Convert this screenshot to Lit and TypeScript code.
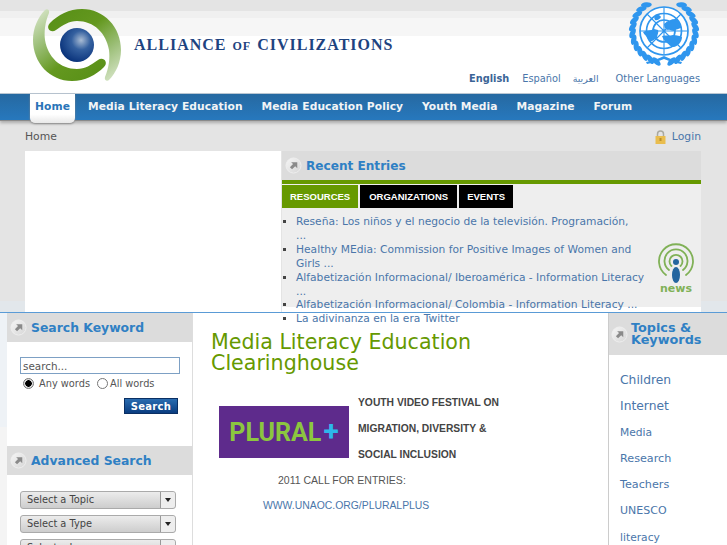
import { LitElement, html, svg, css } from 'lit';
import { customElement } from 'lit/decorators.js';

const NAV = ['Media Literacy Education', 'Media Education Policy', 'Youth Media', 'Magazine', 'Forum'];
// the line breaks are the ones the page shows
const ENTRIES = [
  'Reseña: Los niños y el negocio de la televisión. Programación,\n...',
  'Healthy MEdia: Commission for Positive Images of Women and\nGirls ...',
  'Alfabetización Informacional/ Iberoamérica - Information Literacy\n...',
  'Alfabetización Informacional/ Colombia - Information Literacy ...',
  'La adivinanza en la era Twitter',
];
const TOPICS = [
  { name: 'Children', size: 12.3 },
  { name: 'Internet', size: 12.3 },
  { name: 'Media', size: 10.7 },
  { name: 'Research', size: 11.2 },
  { name: 'Teachers', size: 11.2 },
  { name: 'UNESCO', size: 11 },
  { name: 'literacy', size: 10.7 },
];

const arrowIcon = html`<svg class="arrow" width="17" height="17" viewBox="0 0 18 18">
  <defs>
    <linearGradient id="disc" x1="0" y1="0" x2="1" y2="1">
      <stop offset="0" stop-color="#f6f6f6" />
      <stop offset="1" stop-color="#d6d6d6" />
    </linearGradient>
  </defs>
  <circle cx="9" cy="9" r="8" fill="url(#disc)" stroke="#eee" />
  <path d="M6.500 5.500h6.500v6.500l-2.200-2.200-3.300 3.300-2.300-2.300 3.300-3.300z" fill="#8a8a8a" />
</svg>`;

const swoosh = 'M18 15C26 7 37 1 50 1C72 1 89 19 89 42C89 54 84 65 77 72C75 74 72 72 73 69C77 60 78 50 77 42C74 25 62 13 45 13C37 13 31 17 24 22C19 26 13 20 18 15Z';

const logo = html`<svg class="logo" width="92" height="78" viewBox="0 0 92 78">
  <defs>
    <radialGradient id="sphere" cx="0.62" cy="0.36" r="0.7">
      <stop offset="0" stop-color="#a9bcd4" />
      <stop offset="0.4" stop-color="#34609f" />
      <stop offset="1" stop-color="#062f78" />
    </radialGradient>
    <linearGradient id="sw1" gradientUnits="userSpaceOnUse" x1="30" y1="5" x2="80" y2="70">
      <stop offset="0" stop-color="#5a9118" />
      <stop offset="0.35" stop-color="#64981f" />
      <stop offset="0.7" stop-color="#9cbf78" />
      <stop offset="1" stop-color="#cfe0bd" />
    </linearGradient>
  </defs>
  <path d=${swoosh} fill="url(#sw1)" />
  <path d=${swoosh} fill="url(#sw1)" transform="rotate(180 45 37)" />
  <circle cx="45" cy="37" r="17" fill="url(#sphere)" />
</svg>`;

function leaves(side: number) {
  const out = [];
  for (let a = 14; a <= 150; a += 12) {
    const rad = (a * Math.PI) / 180;
    const r = 31.5;
    const x = 36 + side * r * Math.sin(rad);
    const y = 28 + r * Math.cos(rad);
    const rot = side * (-a + 60);
    out.push(svg`<ellipse cx=${x} cy=${y} rx="2.600" ry="5.400" transform="rotate(${rot} ${x} ${y})" />`);
  }
  return out;
}

const emblem = html`<svg class="emblem" width="72" height="63" viewBox="0 0 72 63" fill="#2f96ee">
  <g>${leaves(1)}${leaves(-1)}</g>
  <path d="M18 59c6-1 12-3 18-6c6 3 12 5 18 6l-1 2c-6-1-12-3-17-5c-5 2-11 4-17 5z" />
  <g fill="none" stroke="#2f96ee" stroke-width="1.700">
    <circle cx="36" cy="28" r="24" fill="#fff" />
    <circle cx="36" cy="28" r="17.500" />
    <circle cx="36" cy="28" r="11" />
    <path d="M36 4v48M12 28h48M19 11l34 34M53 11L19 45" stroke-width="1.100" />
  </g>
  <path d="M15 29c3-2 8-1 11-3l4 1c1 3-1 5-1 8c-3 1-4 4-7 3c-1-3-5-5-7-9z" />
  <path d="M36 21c3-3 7-5 12-5c3 2 5 6 5 9c-2 1-5 1-7 3c-3 0-4-2-6-1c-2 0-4-3-4-6z" />
  <path d="M34 33c4-1 8 0 11-1c4 0 7 1 9 2c0 5-4 9-8 10c-4 0-5-3-7-4c-2-2-4-4-5-7z" />
  <path d="M27 12c2-1 5 0 6 2c-1 2-4 4-6 3c-1-2-1-3 0-5z" />
</svg>`;

const newsIcon = html`<svg class="news-icon" width="36" height="40" viewBox="0 0 36 40" fill="none">
  <g stroke="#80b157" stroke-width="1.800" stroke-linecap="round">
    <path d="M8 32A17 17 0 1 1 28 32" />
    <path d="M11 27A11.500 11.500 0 1 1 25 27" />
    <path d="M13.500 23A6.500 6.500 0 1 1 22.500 23" />
  </g>
  <circle cx="18" cy="19" r="3" fill="#24659f" />
  <ellipse cx="18" cy="32" rx="4" ry="8" fill="#24659f" />
</svg>`;

const lockIcon = html`<svg class="lock" width="11" height="14" viewBox="0 0 11 14">
  <path d="M2.500 7V4a3 3 0 0 1 6 0v3" fill="none" stroke="#a9a9a0" stroke-width="1.500" />
  <rect x="0.500" y="6" width="10" height="8" fill="#e9bd4e" />
  <rect x="4.500" y="8" width="2" height="3" fill="#b98f2c" />
</svg>`;

@customElement('app-root')
export class AppRoot extends LitElement {
  static styles = css`
    :host {
      display: block;
      width: 100%;
      height: 545px;
      overflow: hidden;
      font-family: 'DejaVu Sans', sans-serif;
      font-size: 10.800px;
      background: #e4e4e4;
      color: #555;
    }
    a { color: #4a76aa; }

    .masthead {
      height: 93px;
      box-sizing: border-box;
      display: flex;
      justify-content: space-between;
      padding: 0 27px 0 32px;
      background: linear-gradient(#e4e4e4 0 11px, #f0f0f0 11px 18px, #f6f6f6 18px 36px, #fff 36px);
    }
    .brand { display: flex; align-items: flex-start; }
    .logo { margin-top: 8px; flex: none; }
    .wordmark {
      margin: 36px 0 0 10px;
      font-family: 'Liberation Serif', serif;
      font-weight: bold;
      font-size: 16px;
      line-height: 18px;
      letter-spacing: 1px;
      color: #1e4380;
    }
    .wordmark small { font-size: 12px; margin: 0 1px; }
    .side { display: flex; flex-direction: column; align-items: flex-end; }
    .emblem { margin-top: 3px; overflow: visible; }
    .langs {
      display: flex;
      align-items: center;
      margin-top: 6px;
      font-size: 9.800px;
      line-height: 13px;
      color: #4a76aa;
    }
    .langs b { color: #3a6496; margin-right: 13px; }
    .langs .ar { margin: 0 17px 0 12px; font-size: 9.500px; }

    .nav {
      height: 27px;
      display: flex;
      gap: 18.800px;
      padding-left: 30px;
      background: linear-gradient(#2669a1, #2778bd);
      box-shadow: 0 1px 0 #8a8a8a, 0 3px 3px #aaa;
      border-top: 1px solid #b9c6d2;
      box-sizing: border-box;
      position: relative;
      font-weight: bold;
      font-size: 10.700px;
      line-height: 26px;
      color: #f2f4f6;
      letter-spacing: 0.1px;
    }
    .nav .current {
      width: 45px;
      height: 29px;
      margin-right: -5.800px;
      box-sizing: border-box;
      text-align: center;
      color: #2a74b8;
      background: linear-gradient(#fff 70%, #e8e8e8);
      border-radius: 0 0 5px 5px;
      box-shadow: 0 1px 2px #888;
    }

    .crumbs {
      display: flex;
      justify-content: space-between;
      align-items: center;
      height: 31px;
      padding: 2px 26px 0 25px;
      box-sizing: border-box;
    }
    .crumbs .login { display: flex; align-items: center; gap: 6px; color: #4a76aa; }

    .top {
      height: 161px;
      display: flex;
      gap: 1px;
      padding: 0 26px 0 25px;
      background: linear-gradient(#e4e4e4 150px, #e2e7eb 150px);
    }
    .blank { width: 256px; background: #fff; }
    .recent {
      flex: 1;
      display: flex;
      flex-direction: column;
      background: linear-gradient(#eee 156px, #fff 156px);
    }
    .block-title {
      flex: none;
      display: flex;
      align-items: center;
      gap: 4px;
      height: 29px;
      padding-left: 3px;
      box-sizing: border-box;
      background: #dcdcdc;
      color: #2f80c4;
      font-weight: bold;
      font-size: 12.400px;
      line-height: 12px;
    }
    .recent .block-title { font-size: 12.100px; }
    .arrow { flex: none; }
    .tabs {
      flex: none;
      display: flex;
      gap: 2px;
      border-top: 4px solid #669900;
      padding-top: 1px;
      font-family: 'Liberation Sans', sans-serif;
      font-weight: bold;
      font-size: 9.500px;
      line-height: 23px;
      color: #fff;
    }
    .tabs span { padding: 0 8px; background: #000; }
    .tabs span:nth-child(2) { padding: 0 9px; }
    .tabs .on { background: #669900; }
    .entries { flex: none; display: flex; justify-content: space-between; padding-right: 7px; }
    .entries ul {
      list-style: square;
      width: 350px;
      margin: 7px 0 0;
      padding: 0 0 0 14px;
      font-size: 10.700px;
      line-height: 13.900px;
      color: #4a76aa;
      white-space: pre-line;
    }
    .entries li::marker { color: #444; font-size: 10px; }
    .stamp {
      display: flex;
      flex-direction: column;
      align-items: center;
      margin-top: 35px;
      color: #80b157;
      font-weight: bold;
      font-size: 11px;
      line-height: 12px;
    }

    .lower {
      display: flex;
      height: 233px;
      border-top: 1px solid #5a9bd6;
      background: #fff;
    }
    .gutter { width: 7px; flex: none; background: linear-gradient(#eef2f6 114px, #f4f4f4 114px); }
    .left { width: 185px; flex: none; border-right: 1px solid #ddd; }
    .search { height: 104px; padding: 15px 13px 0; box-sizing: border-box; }
    .search input[type='text'] {
      display: block;
      width: 160px;
      height: 17px;
      box-sizing: border-box;
      border: 1px solid #7da0c4;
      padding: 0 2px;
      margin: 0;
      font: 10.400px 'DejaVu Sans', sans-serif;
      color: #555;
    }
    .radios { display: flex; align-items: center; height: 18px; font-size: 9.800px; padding-left: 3px; }
    .radios label { display: flex; align-items: center; gap: 5px; margin-right: 7px; }
    .radios label + label { gap: 2px; }
    .radios input {
      appearance: none;
      width: 11px;
      height: 11px;
      margin: 0;
      border: 1px solid #777;
      border-radius: 50%;
      background: #fff;
      box-sizing: border-box;
    }
    .radios input:checked { background: radial-gradient(circle, #000 3px, #ddd 3.500px); }
    .go { display: flex; justify-content: flex-end; margin: 6px 1px 0 0; }
    .go button {
      width: 54px;
      height: 16px;
      padding: 0;
      border: 1px solid #0a2f63;
      background: linear-gradient(#2a6cb0, #0a3d80);
      color: #fff;
      font: bold 10px/13px 'DejaVu Sans', sans-serif;
      letter-spacing: 0.3px;
    }
    .filters { display: flex; flex-direction: column; gap: 6px; padding: 16px 16px 0 13px; }
    .combo {
      display: flex;
      height: 18px;
      box-sizing: border-box;
      border: 1px solid #aaa;
      border-radius: 3px;
      background: linear-gradient(#ececec, #cdcdcd);
      font-size: 9.800px;
      line-height: 16px;
      color: #444;
    }
    .combo span { flex: 1; padding-left: 6px; }
    .combo i {
      width: 14px;
      border-left: 1px solid #999;
      display: flex;
      align-items: center;
      justify-content: center;
      background: #eee;
      border-radius: 0 3px 3px 0;
    }
    .combo i::after {
      content: '';
      border: 3.500px solid transparent;
      border-top: 4px solid #222;
      border-bottom: 0;
    }

    .center { flex: 1; padding: 19px 0 0 18px; }
    .center h1 {
      margin: 0;
      font-size: 20.600px;
      font-weight: normal;
      line-height: 21px;
      color: #669900;
    }
    .promo {
      font-family: 'Liberation Sans', sans-serif;
      line-height: 26px;
      font-size: 10.500px;
    }
    .promo .row { display: flex; height: 78px; margin: 15px 0 0 8px; }
    .plural {
      width: 130px;
      height: 52px;
      margin-top: 17px;
      flex: none;
      background: #5e2b8c;
      color: #8cc63f;
      font: bold 25px/52px Roboto, sans-serif;
      text-align: center;
    }
    .plural span { margin-left: 2px; font-size: 28px; color: #2db8ea; }
    .promo .head { margin: 1px 0 0 9px; font-weight: bold; font-size: 10.300px; color: #444; }
    .promo .call { margin-left: 67px; }
    .promo .url { margin-left: 52px; display: block; font-size: 10.400px; }

    .right { width: 119px; flex: none; border-left: 1px solid #ccc; box-sizing: border-box; }
    .right .block-title { height: 42px; padding-left: 2px; gap: 3px; font-size: 12.800px; }
    .right nav { display: flex; flex-direction: column; padding: 12px 0 0 11px; color: #4a76aa; line-height: 26.300px; }
  `;

  render() {
    return html`
      <header class="masthead">
        <div class="brand">
          ${logo}
          <div class="wordmark">ALLIANCE <small>OF</small> CIVILIZATIONS</div>
        </div>
        <div class="side">
          ${emblem}
          <div class="langs">
            <b>English</b><span>Español</span><span class="ar">العربية</span><span>Other Languages</span>
          </div>
        </div>
      </header>
      <div class="nav">
        <span class="current">Home</span>
        ${NAV.map(item => html`<span>${item}</span>`)}
      </div>
      <div class="crumbs">
        <span>Home</span>
        <span class="login">${lockIcon}Login</span>
      </div>
      <section class="top">
        <div class="blank"></div>
        <div class="recent">
          <div class="block-title">${arrowIcon}<span>Recent Entries</span></div>
          <div class="tabs">
            <span class="on">RESOURCES</span><span>ORGANIZATIONS</span><span>EVENTS</span>
          </div>
          <div class="entries">
            <ul>${ENTRIES.map(entry => html`<li>${entry}</li>`)}</ul>
            <div class="stamp">${newsIcon}<span>news</span></div>
          </div>
        </div>
      </section>
      <section class="lower">
        <div class="gutter"></div>
        <aside class="left">
          <div class="block-title">${arrowIcon}<span>Search Keyword</span></div>
          <div class="search">
            <input type="text" value="search..." />
            <div class="radios">
              <label><input type="radio" name="mode" checked />Any words</label>
              <label><input type="radio" name="mode" />All words</label>
            </div>
            <div class="go"><button>Search</button></div>
          </div>
          <div class="block-title">${arrowIcon}<span>Advanced Search</span></div>
          <div class="filters">
            ${['Select a Topic', 'Select a Type', 'Select a Language'].map(
              label => html`<div class="combo"><span>${label}</span><i></i></div>`
            )}
          </div>
        </aside>
        <main class="center">
          <h1>Media Literacy Education Clearinghouse</h1>
          <div class="promo">
            <div class="row">
              <div class="plural">PLURAL<span>+</span></div>
              <div class="head">YOUTH VIDEO FESTIVAL ON<br />MIGRATION, DIVERSITY &amp;<br />SOCIAL INCLUSION</div>
            </div>
            <div class="call">2011 CALL FOR ENTRIES:</div>
            <a class="url">WWW.UNAOC.ORG/PLURALPLUS</a>
          </div>
        </main>
        <aside class="right">
          <div class="block-title">${arrowIcon}<span>Topics &amp;<br />Keywords</span></div>
          <nav>
            ${TOPICS.map(topic => html`<span style="font-size: ${topic.size}px">${topic.name}</span>`)}
          </nav>
        </aside>
      </section>
    `;
  }
}
